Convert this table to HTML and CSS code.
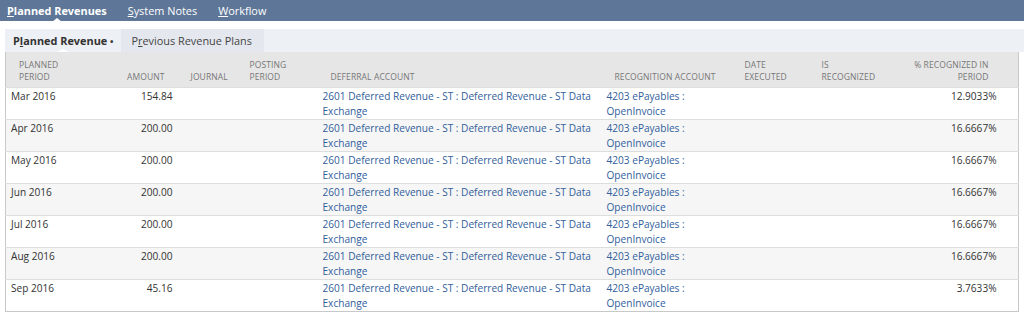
FILE: index.html
```html
<!DOCTYPE html>
<html lang="en">
<head>
    <meta charset="UTF-8">
    <title>Planned Revenues</title>
    <link rel="stylesheet" href="styles.css">
</head>
<body>

<div class="topbar">
    <span class="tab active"><u>P</u>lanned Revenues</span>
    <span class="tab"><u>S</u>ystem Notes</span>
    <span class="tab"><u>W</u>orkflow</span>
</div>

<div class="panel">
    <div class="subtabs">
        <span class="subtab active">P<u>l</u>anned Revenue <span class="dot">&bull;</span></span>
        <span class="subtab other">P<u>r</u>evious Revenue Plans</span>
    </div>

    <table class="grid">
        <colgroup>
            <col style="width: 95px">
            <col style="width: 77px">
            <col style="width: 59px">
            <col style="width: 81px">
            <col style="width: 284px">
            <col style="width: 130px">
            <col style="width: 77px">
            <col style="width: 91px">
            <col style="width: 102px">
            <col>
        </colgroup>
        <thead>
            <tr>
                <th>PLANNED<br>PERIOD</th>
                <th class="num">AMOUNT</th>
                <th>JOURNAL</th>
                <th>POSTING<br>PERIOD</th>
                <th>DEFERRAL ACCOUNT</th>
                <th>RECOGNITION ACCOUNT</th>
                <th>DATE<br>EXECUTED</th>
                <th>IS<br>RECOGNIZED</th>
                <th class="num">% RECOGNIZED IN<br>PERIOD</th>
                <th></th>
            </tr>
        </thead>
        <tbody id="rows"></tbody>
    </table>
</div>

<script>
    const plan = [
        ['Mar 2016', '154.84', '12.9033%'],
        ['Apr 2016', '200.00', '16.6667%'],
        ['May 2016', '200.00', '16.6667%'],
        ['Jun 2016', '200.00', '16.6667%'],
        ['Jul 2016', '200.00', '16.6667%'],
        ['Aug 2016', '200.00', '16.6667%'],
        ['Sep 2016', '45.16', '3.7633%']
    ];

    const body = document.getElementById('rows');
    plan.forEach(p => {
        const tr = document.createElement('tr');
        tr.innerHTML = `
            <td>${p[0]}</td>
            <td class="num">${p[1]}</td>
            <td></td>
            <td></td>
            <td><a href="#">2601 Deferred Revenue - ST : Deferred Revenue - ST Data Exchange</a></td>
            <td><a href="#">4203 ePayables : OpenInvoice</a></td>
            <td></td>
            <td></td>
            <td class="num">${p[2]}</td>
            <td></td>
        `;
        body.appendChild(tr);
    });
</script>

</body>
</html>
```

FILE: styles.css
```css
body {
    font-family: 'Open Sans', sans-serif;
    margin: 0;
    padding: 0;
    background-color: #fff;
    color: #333;
}

/* Main tabs */
.topbar {
    background-color: #5e7698;
    height: 21px;
    display: flex;
    align-items: center;
    padding-left: 7px;
    gap: 21px;
}

.topbar .tab {
    color: #fff;
    font-size: 10.9px;
    position: relative;
    line-height: 21px;
    white-space: nowrap;
}

.topbar .tab.active {
    font-weight: bold;
}

.topbar .tab.active::after {
    content: '';
    position: absolute;
    left: 50%;
    bottom: -1px;
    margin-left: -5px;
    border-left: 5px solid transparent;
    border-right: 5px solid transparent;
    border-bottom: 4px solid #fff;
}

/* Sub tabs */
.panel {
    margin: 8px 0 0 5px;
}

.subtabs {
    background-color: #edf0f4;
    height: 23px;
    display: flex;
    align-items: stretch;
}

.subtab {
    font-size: 10.9px;
    line-height: 23px;
    position: relative;
    white-space: nowrap;
}

.subtab.active {
    font-weight: bold;
    color: #333;
    padding: 0 8px 0 8px;
}

.subtab.active .dot {
    font-size: 9px;
}

.subtab.active::after {
    content: '';
    position: absolute;
    left: 50%;
    bottom: 0;
    margin-left: -6px;
    border-left: 6px solid transparent;
    border-right: 6px solid transparent;
    border-bottom: 3px solid #fff;
}

.subtab.other {
    background-color: #e4e8ee;
    color: #444;
    padding: 0 12px 0 10px;
}

/* Grid */
.grid {
    border-collapse: collapse;
    table-layout: fixed;
    width: 1014px;
    border: 1px solid #c8c8c8;
    border-top: none;
}

.grid th {
    background-color: #e6e6e6;
    color: #777;
    font-size: 8.5px;
    font-weight: normal;
    text-align: left;
    vertical-align: bottom;
    padding: 4px 8px 5px 13px;
    height: 26px;
    line-height: 11.5px;
    letter-spacing: 0.1px;
}

.grid th.num {
    text-align: right;
    padding-right: 13px;
}

.grid td {
    font-size: 10.1px;
    line-height: 15px;
    vertical-align: top;
    padding: 1px 5px 0 5px;
    height: 30px;
    border-top: 1px solid #dedede;
}

.grid td.num {
    text-align: right;
}

.grid tbody tr:nth-child(even) td {
    background-color: #f6f6f6;
}

.grid a {
    color: #31609b;
    text-decoration: none;
}
```
